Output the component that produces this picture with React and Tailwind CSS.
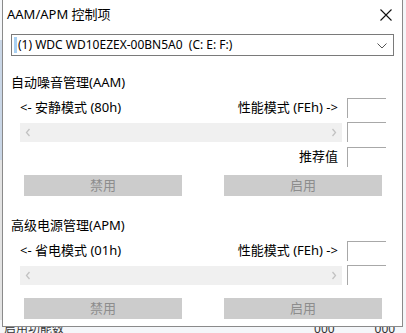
import React from "react";

const font = { fontFamily: '"Noto Sans", "Noto Sans CJK SC", sans-serif' };

function Box() {
  return <div className="w-[39px] h-[20px] border-t border-l border-[#a8a8a8] bg-white" />;
}

function Scroll() {
  return (
    <div className="w-[322px] h-[19px] bg-[#f0f0f0] flex items-center justify-between px-[5px]">
      <svg width="6" height="9" viewBox="0 0 6 9">
        <path d="M4.5 1 L1.5 4.5 L4.5 8" stroke="#c2c2c2" strokeWidth="1.3" fill="none" />
      </svg>
      <svg width="6" height="9" viewBox="0 0 6 9">
        <path d="M1.5 1 L4.5 4.5 L1.5 8" stroke="#c2c2c2" strokeWidth="1.3" fill="none" />
      </svg>
    </div>
  );
}

function Buttons({ mt }) {
  return (
    <div className={`flex ${mt}`}>
      <div className="ml-[21px] w-[158px] h-[21px] bg-[#cccccc] flex items-center justify-center text-[13px] text-[#8d8d8d]">禁用</div>
      <div className="ml-[42px] w-[158px] h-[21px] bg-[#cccccc] flex items-center justify-center text-[13px] text-[#8d8d8d]">启用</div>
    </div>
  );
}

function Section({ title, left, mtTitle, withRec, mtButtons }) {
  return (
    <>
      <div className={`${mtTitle} ml-[8px] h-[20px] flex items-center text-[13px] text-black`}>{title}</div>
      <div className="mt-[5px] flex">
        <div className="ml-[17px] w-[322px] h-[20px] flex items-center justify-between pr-[4px] text-[13px] text-black">
          <span>{left}</span>
          <span>性能模式 (FEh) -&gt;</span>
        </div>
        <div className="ml-[5px]"><Box /></div>
      </div>
      <div className="mt-[4px] flex">
        <div className="ml-[17px] mt-[1px]"><Scroll /></div>
        <div className="ml-[5px]"><Box /></div>
      </div>
      {withRec && (
        <div className="mt-[5px] flex">
          <div className="ml-[17px] w-[322px] h-[20px] flex items-center justify-end pr-[4px] text-[13px] text-black">推荐值</div>
          <div className="ml-[5px]"><Box /></div>
        </div>
      )}
      <Buttons mt={mtButtons} />
    </>
  );
}

export default function App() {
  return (
    <div className="w-[406px] h-[333px] bg-[#f4f6f9] overflow-hidden relative" style={font}>
      <div className="absolute left-0 top-[40px] w-[2px] h-[120px] bg-[#c9d6e6]" />
      <div className="absolute left-0 top-[160px] w-[2px] h-[160px] bg-[#e3e3e3]" />
      <div className="ml-[2px] w-[401px] h-[327px] border-l border-r border-b border-[#8a8a8a] bg-white flex flex-col relative">
        <div className="h-[30px] flex items-center justify-between pl-[4px] pr-[10px]">
          <span className="text-[13px] text-black">AAM/APM 控制项</span>
          <svg width="12" height="12" viewBox="0 0 12 12">
            <path d="M0.5 0.5 L11.5 11.5 M11.5 0.5 L0.5 11.5" stroke="#111" strokeWidth="1.1" />
          </svg>
        </div>
        <div className="mt-[4px] ml-[8px] w-[383px] h-[22px] border border-[#7a7a7a] flex items-center relative">
          <div className="ml-[2px] w-[3px] h-[16px] bg-[#a8d0f2]" />
          <span className="ml-[1px] text-[12px] text-black whitespace-pre">(1) WDC WD10EZEX-00BN5A0  (C: E: F:)</span>
          <svg className="absolute right-[6px] top-[8px]" width="10" height="6" viewBox="0 0 10 6">
            <path d="M0.5 0.5 L5 5 L9.5 0.5" stroke="#555" strokeWidth="1" fill="none" />
          </svg>
        </div>
        <Section title="自动噪音管理(AAM)" left="<- 安静模式 (80h)" mtTitle="mt-[17px]" withRec mtButtons="mt-[8px]" />
        <Section title="高级电源管理(APM)" left="<- 省电模式 (01h)" mtTitle="mt-[20px]" mtButtons="mt-[13px]" />
      </div>
      <div className="absolute left-[4px] top-[327px] h-[6px] w-[400px] overflow-hidden">
        <div className="-mt-[7px] flex text-[12px] text-[#333] whitespace-nowrap">
          <span>启用功能数</span>
          <span className="ml-[250px]">000</span>
          <span className="ml-[40px]">000</span>
        </div>
      </div>
    </div>
  );
}
